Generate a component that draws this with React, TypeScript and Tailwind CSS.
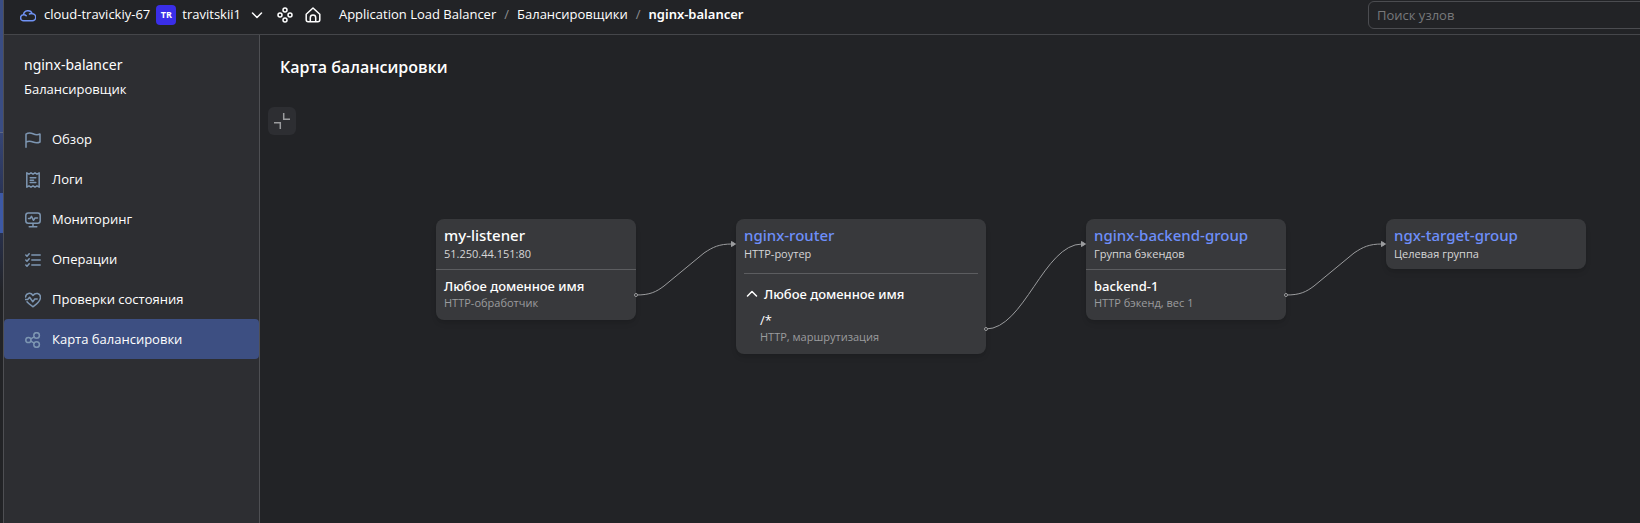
import type { ReactNode } from "react";

type IconProps = { className?: string; children: ReactNode };

function Icon({ className = "size-4", children }: IconProps) {
  return (
    <svg
      className={`shrink-0 ${className}`}
      viewBox="0 0 16 16"
      fill="none"
      stroke="currentColor"
      strokeWidth="1.5"
      strokeLinecap="round"
      strokeLinejoin="round"
      aria-hidden="true"
    >
      {children}
    </svg>
  );
}

const menu = [
  {
    label: "Обзор",
    icon: <path d="M1 15.200V2.200C3.500 .5 5.500 .7 8 1.800s4.500 1.400 7 .2v8c-2.500 1.200-4.500 1-7 0s-4.500-1.300-7 .2" />,
  },
  {
    label: "Логи",
    icon: (
      <path d="M1.800 .8 4 2.200 6 .8 8 2.200 10 .8l2 1.400 2.200-1.400v14.400L12 13.800l-2 1.400-2-1.400-2 1.400-2-1.400-2.200 1.400ZM5.200 5.800h5.600M5.200 8.200h3.300M5.200 10.600h5.600" />
    ),
  },
  {
    label: "Мониторинг",
    icon: (
      <>
        <rect x=".8" y="1" width="14.400" height="10.200" rx="2.500" />
        <path d="M3.500 6.500H5L6.500 4.300l2 4L10 6h2.500M8 11.500v3M4.200 14.800h7.600" />
      </>
    ),
  },
  {
    label: "Операции",
    icon: <path d="M6.800 3h8.400M6.800 8h8.400M6.800 13h8.400M.8 3l1.200 1.200L4.200 1.700M.8 8l1.200 1.200 2.200-2.500M.8 13l1.200 1.200 2.200-2.500" />,
  },
  {
    label: "Проверки состояния",
    icon: (
      <path d="M.6 5C.8 .8 5.800 .2 8 3.500c2.200-3.300 7.500-2.600 7.500 2C15.500 9.500 11 12.500 8 14.800 6 13.300 3.300 11.500 2 9.800M-.3 7.500h3L4.600 5.300l3.200 4.400L9.800 7h2.400" />
    ),
  },
  {
    label: "Карта балансировки",
    active: true,
    icon: (
      <>
        <circle cx="3.400" cy="8" r="2.600" />
        <circle cx="11.600" cy="3.500" r="2.800" />
        <circle cx="11.600" cy="12.500" r="2.800" />
        <path d="M5.800 6.800 9.200 4.900M5.800 9.200l3.400 1.900" />
      </>
    ),
  },
];

function Header() {
  return (
    <header className="flex h-[35px] shrink-0 items-center border-b border-[#45464a] pb-1 pl-4">
      <a href="#cloud" className="flex items-center gap-2">
        <Icon className="size-4 text-[#7193f5]">
          <path d="M3.700 13.800a3 3 0 0 1-.2-6A4.500 4.500 0 0 1 12.200 6.800a3.500 3.500 0 0 1 .1 7ZM3.600 7.800a3 3 0 0 1 2.600 .9M9.500 7a3 3 0 0 1 2.700-.2" />
        </Icon>
        cloud-travickiy-67
      </a>
      <button type="button" className="ml-[6px] flex items-center">
        <span className="flex size-5 items-center justify-center rounded-sm bg-[#3a2ee8] text-[9px] font-bold">TR</span>
        <span className="ml-[6px]">travitskii1</span>
        <Icon className="ml-2 size-4">
          <path d="m3.500 6 4.500 4.500L12.500 6" />
        </Icon>
      </button>
      <button type="button" aria-label="Сервисы" className="ml-3">
        <Icon>
          <circle cx="8" cy="3" r="2" />
          <circle cx="3" cy="8" r="2" />
          <circle cx="13" cy="8" r="2" />
          <circle cx="8" cy="13" r="2" />
        </Icon>
      </button>
      <a href="#home" aria-label="Главная" className="ml-3">
        <Icon>
          <path d="M1.200 7.200 8 1l6.800 6.200v5.500a2 2 0 0 1-2 2h-9.600a2 2 0 0 1-2-2ZM5.300 14.500V10.700a2.700 2.700 0 0 1 5.400 0v3.800" />
        </Icon>
      </a>
      <nav aria-label="Навигация" className="ml-[18px] flex items-center gap-2 whitespace-nowrap">
        <a href="#alb">Application Load Balancer</a>
        <span className="text-[#8d8e91]">/</span>
        <a href="#balancers">Балансировщики</a>
        <span className="text-[#8d8e91]">/</span>
        <a href="#nginx" className="font-['Noto_Sans',sans-serif] font-semibold">nginx-balancer</a>
      </nav>
      <input
        type="search"
        aria-label="Поиск узлов"
        placeholder="Поиск узлов"
        className="-mr-2 ml-auto h-7 w-[280px] shrink-0 rounded-md border border-[#4b4c50] bg-transparent px-2 placeholder:text-[#77787b]"
      />
    </header>
  );
}

function Sidebar() {
  return (
    <aside className="w-64 shrink-0 border-r border-[#4e4f53] bg-[#2d2e32]">
      <div className="px-5 pt-5">
        <div className="font-['Noto_Sans',sans-serif] text-[14px] leading-5">nginx-balancer</div>
        <div className="mt-1 leading-5">Балансировщик</div>
      </div>
      <nav aria-label="Разделы" className="mt-5">
        {menu.map((item) => (
          <a
            key={item.label}
            href="#section"
            className={`flex h-10 items-center gap-[11px] rounded-sm pt-0.5 pl-[21px] ${item.active ? "bg-[#3d4f82]" : ""}`}
          >
            <Icon className="size-4 text-[#7d96b2]">{item.icon}</Icon>
            {item.label}
          </a>
        ))}
      </nav>
    </aside>
  );
}

type NodeProps = { className: string; title: string; link?: boolean; subtitle: string; children?: ReactNode };

function MapNode({ className, title, link, subtitle, children }: NodeProps) {
  return (
    <article className={`absolute top-[184px] rounded-lg bg-[#38393c] shadow-md ${className}`}>
      <div className="h-[50px] px-2 pt-[6px]">
        <h2 className="font-['Noto_Sans',sans-serif] text-[15px] leading-5 font-medium">
          {link ? <a href="#node" className="text-[#6e8ffa]">{title}</a> : title}
        </h2>
        <p className="mt-px text-[11px] leading-4 text-[#d6d6d7]">{subtitle}</p>
      </div>
      {children}
    </article>
  );
}

function Endpoint({ title, note }: { title: string; note: string }) {
  return (
    <div className="h-[51px] border-t border-[#5c5d60] px-2 pt-[7px]">
      <h3 className="font-['Noto_Sans',sans-serif] leading-[18px] font-medium">{title}</h3>
      <p className="text-[11px] leading-4 text-[#9b9c9e]">{note}</p>
    </div>
  );
}

function BalancerMap() {
  return (
    <main className="relative min-w-0 flex-1 overflow-hidden">
      <h1 className="px-5 pt-5 text-[16px] leading-6 font-semibold">Карта балансировки</h1>
      <button
        type="button"
        aria-label="Свернуть"
        className="mt-7 ml-2 flex size-7 items-center justify-center rounded-md bg-[#2d2e32] text-[#9b9c9e]"
      >
        <svg className="size-4" viewBox="0 0 16 16" fill="none" stroke="currentColor" strokeWidth="1.500" aria-hidden="true">
          <path d="M9.700 0v6.300H16M0 9.700h6.300V16" />
        </svg>
      </button>
      <MapNode className="left-[176px] w-[200px]" title="my-listener" subtitle="51.250.44.151:80">
        <Endpoint title="Любое доменное имя" note="HTTP-обработчик" />
      </MapNode>
      <MapNode className="left-[476px] w-[250px]" title="nginx-router" link subtitle="HTTP-роутер">
        <div className="mx-2 mt-1 border-t border-[#5c5d60] pt-[11px] pb-[9px]">
          <button type="button" className="flex items-center gap-1 font-['Noto_Sans',sans-serif] leading-[18px] font-medium">
            <Icon className="size-4">
              <path d="m3.500 10 4.500-4.500 4.500 4.500" />
            </Icon>
            Любое доменное имя
          </button>
          <div className="pt-2 pl-4">
            <div className="leading-[18px]">/*</div>
            <p className="text-[11px] leading-4 text-[#9b9c9e]">HTTP, маршрутизация</p>
          </div>
        </div>
      </MapNode>
      <MapNode className="left-[826px] w-[200px]" title="nginx-backend-group" link subtitle="Группа бэкендов">
        <Endpoint title="backend-1" note="HTTP бэкенд, вес 1" />
      </MapNode>
      <MapNode className="left-[1126px] w-[200px]" title="ngx-target-group" link subtitle="Целевая группа" />
      <svg
        className="pointer-events-none absolute top-[184px] left-0 h-[140px] w-[1330px]"
        viewBox="0 0 1330 140"
        fill="none"
        stroke="#9b9c9e"
        aria-hidden="true"
      >
        <path d="M376 76c14 0 20-3 28-9L444 34c9-6 15-9 28-9M726 110C764 110 784 25 822 25M1026 76c14 0 20-3 28-9L1094 34c9-6 15-9 28-9" />
        <path d="m471.500 22.500 4 2.500-4 2.500ZM821.500 22.500l4 2.500-4 2.500ZM1121.500 22.500l4 2.500-4 2.500Z" fill="#9b9c9e" />
        <g fill="#222326">
          <circle cx="376" cy="76" r="1.500" />
          <circle cx="726" cy="110" r="1.500" />
          <circle cx="1026" cy="76" r="1.500" />
        </g>
      </svg>
    </main>
  );
}

export default function App() {
  return (
    <div className="flex min-h-screen overflow-hidden bg-[#222326] font-['Open_Sans','Noto_Sans',sans-serif] text-[13px] text-white">
      <div className="flex w-1 shrink-0 flex-col border-r border-[#4e4f53]">
        <div className="h-[132px] bg-[#3a4d83]" />
        <div className="h-[61px] border-t border-[#5c6684] bg-linear-to-b from-[#364676] to-[#2a3456]" />
        <div className="h-10 bg-[#3d59a5]" />
        <div className="h-[60px] bg-linear-to-b from-[#28304c] to-[#222326]" />
      </div>
      <div className="flex min-w-0 flex-1 flex-col">
        <Header />
        <div className="flex flex-1">
          <Sidebar />
          <BalancerMap />
        </div>
      </div>
    </div>
  );
}
